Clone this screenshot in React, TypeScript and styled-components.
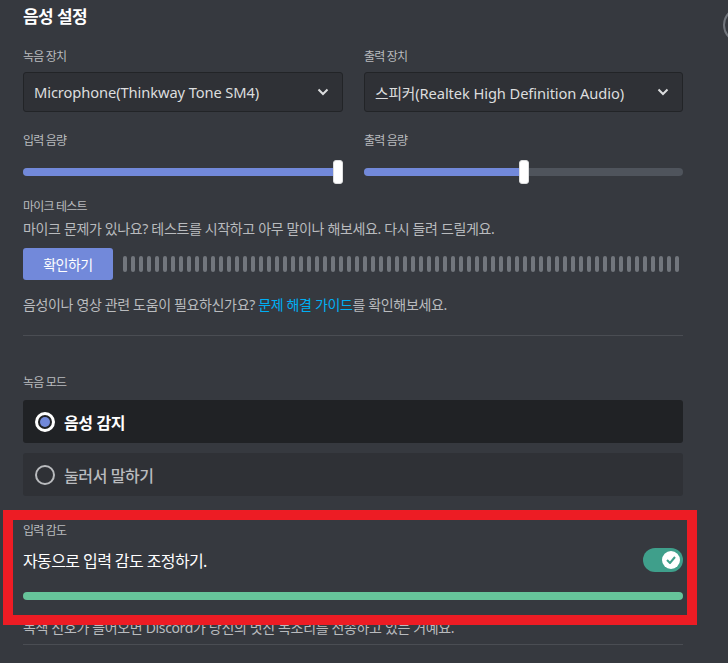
import styled, { createGlobalStyle } from "styled-components";

const GlobalStyle = createGlobalStyle`
  html, body {
    margin: 0;
    padding: 0;
    background: #36393f;
  }
  body {
    font-family: "Noto Sans", "Noto Sans CJK KR", sans-serif;
    color: #dcddde;
  }
`;

const meterBars = Array.from({ length: 70 });

const Slider = ({ value }: { value: number }) => {
  // handle center moves between 5px and (width - 5px)
  const pos = `calc(5px + (100% - 10px) * ${value / 100})`;
  return (
    <SliderTrack>
      <SliderFill style={{ width: pos }} />
      <SliderHandle style={{ left: pos }} />
    </SliderTrack>
  );
};

const Chevron = () => (
  <svg width="12" height="8" viewBox="0 0 12 8">
    <path d="M1.5 1.5 L6 6 L10.5 1.5" fill="none" stroke="#dcddde" strokeWidth="2" />
  </svg>
);

const App = () => {
  return (
    <Page>
      <GlobalStyle />
      <Content>
        <Title>음성 설정</Title>

        <TwoCols $top={20}>
          <div>
            <Label>녹음 장치</Label>
            <Select>
              <span>Microphone(Thinkway Tone SM4)</span>
              <Chevron />
            </Select>
          </div>
          <div>
            <Label>출력 장치</Label>
            <Select>
              <span>스피커(Realtek High Definition Audio)</span>
              <Chevron />
            </Select>
          </div>
        </TwoCols>

        <TwoCols $top={21}>
          <div>
            <Label $gap={11}>입력 음량</Label>
            <Slider value={100} />
          </div>
          <div>
            <Label $gap={11}>출력 음량</Label>
            <Slider value={50} />
          </div>
        </TwoCols>

        <Label $top={15} $gap={4}>마이크 테스트</Label>
        <Description>
          마이크 문제가 있나요? 테스트를 시작하고 아무 말이나 해보세요. 다시 들려 드릴게요.
        </Description>
        <TestRow>
          <PrimaryButton>확인하기</PrimaryButton>
          <Meter>
            {meterBars.map((_, i) => (
              <MeterBar key={i} />
            ))}
          </Meter>
        </TestRow>
        <Description $top={15}>
          음성이나 영상 관련 도움이 필요하신가요? <Link>문제 해결 가이드</Link>를 확인해보세요.
        </Description>

        <Divider $top={20} />

        <Label $top={39} $gap={9}>녹음 모드</Label>
        <Options>
          <Option $selected>
            <Radio $selected />
            <span>음성 감지</span>
          </Option>
          <Option>
            <Radio />
            <span>눌러서 말하기</span>
          </Option>
        </Options>

        <Sensitivity>
          <Label $gap={9}>입력 감도</Label>
          <ToggleRow>
            <span>자동으로 입력 감도 조정하기.</span>
            <Toggle>
              <Knob>
                <svg width="10" height="8" viewBox="0 0 10 8">
                  <path d="M1 4 L4 7 L9 1" fill="none" stroke="#3f9f8b" strokeWidth="2" />
                </svg>
              </Knob>
            </Toggle>
          </ToggleRow>
          <LevelBar />
          <Highlight />
        </Sensitivity>

        <Description $top={18}>
          녹색 신호가 들어오면 Discord가 당신의 멋진 목소리를 전송하고 있는 거예요.
        </Description>
        <Divider $top={6} />
      </Content>
      <Tools>
        <CloseCircle />
      </Tools>
    </Page>
  );
};

export default App;

const Page = styled.div`
  display: flex;
  width: 728px;
  height: 663px;
  overflow: hidden;
  background: #36393f;
`;

const Content = styled.div`
  width: 660px;
  flex-shrink: 0;
  padding: 5px 0 0 23px;
  display: flex;
  flex-direction: column;
`;

const Tools = styled.div`
  flex-shrink: 0;
  margin-left: 40px;
  padding-top: 7px;
`;

const CloseCircle = styled.div`
  width: 32px;
  height: 32px;
  border-radius: 50%;
  border: 2px solid #72767d;
`;

const Title = styled.h2`
  margin: 0;
  font-size: 17px;
  line-height: 24px;
  font-weight: 700;
  color: #fff;
  letter-spacing: -0.6px;
`;

const TwoCols = styled.div<{ $top: number }>`
  display: grid;
  grid-template-columns: 320px 319px;
  column-gap: 21px;
  margin-top: ${(p) => p.$top}px;
`;

const Label = styled.div<{ $top?: number; $gap?: number }>`
  font-size: 12px;
  line-height: 16px;
  color: #b9bbbe;
  letter-spacing: -0.8px;
  margin-top: ${(p) => p.$top ?? 0}px;
  margin-bottom: ${(p) => p.$gap ?? 7}px;
`;

const Select = styled.div`
  box-sizing: border-box;
  height: 40px;
  display: flex;
  align-items: center;
  justify-content: space-between;
  padding: 0 13px 0 10px;
  background: #2f3136;
  border: 1px solid #222427;
  border-radius: 3px;
  font-size: 14.7px;
  color: #dcddde;
  letter-spacing: -0.1px;
`;

const SliderTrack = styled.div`
  position: relative;
  height: 24px;
  &::before {
    content: "";
    position: absolute;
    left: 0;
    right: 0;
    top: 8px;
    height: 8px;
    border-radius: 4px;
    background: #4f545c;
  }
`;

const SliderFill = styled.div`
  position: absolute;
  left: 0;
  top: 8px;
  height: 8px;
  border-radius: 4px;
  background: #7289da;
`;

const SliderHandle = styled.div`
  position: absolute;
  top: 0;
  width: 10px;
  height: 24px;
  margin-left: -5px;
  box-sizing: border-box;
  border-radius: 3px;
  background: #fff;
  border: 1px solid #dcddde;
`;

const Description = styled.div<{ $top?: number }>`
  font-size: 14px;
  line-height: 20px;
  color: #b9bbbe;
  letter-spacing: -0.35px;
  margin-top: ${(p) => p.$top ?? 0}px;
  white-space: nowrap;
`;

const Link = styled.span`
  color: #00aff4;
`;

const TestRow = styled.div`
  display: flex;
  align-items: center;
  gap: 10px;
  margin-top: 9px;
`;

const PrimaryButton = styled.button`
  width: 90px;
  height: 32px;
  border: none;
  border-radius: 3px;
  background: #7289da;
  color: #fff;
  font-family: inherit;
  font-size: 14px;
  letter-spacing: -0.5px;
  padding: 0;
`;

const Meter = styled.div`
  display: flex;
  gap: 4px;
`;

const MeterBar = styled.div`
  width: 4px;
  height: 16px;
  border-radius: 2px;
  background: #72767d;
`;

const Divider = styled.div<{ $top: number }>`
  height: 1px;
  background: #4a4d53;
  margin-top: ${(p) => p.$top}px;
`;

const Options = styled.div`
  display: flex;
  flex-direction: column;
  gap: 10px;
`;

const Option = styled.div<{ $selected?: boolean }>`
  height: 43px;
  display: flex;
  align-items: center;
  gap: 9px;
  padding-left: 12px;
  border-radius: 3px;
  background: ${(p) => (p.$selected ? "#202225" : "#2f3136")};
  color: ${(p) => (p.$selected ? "#fff" : "#b9bbbe")};
  font-size: 16px;
  font-weight: ${(p) => (p.$selected ? 700 : 500)};
  letter-spacing: -0.4px;
`;

const Radio = styled.div<{ $selected?: boolean }>`
  box-sizing: border-box;
  width: 20px;
  height: 20px;
  border-radius: 50%;
  border: ${(p) => (p.$selected ? "3px solid #fff" : "2px solid #b9bbbe")};
  display: flex;
  align-items: center;
  justify-content: center;
  &::after {
    content: "";
    display: ${(p) => (p.$selected ? "block" : "none")};
    width: 10px;
    height: 10px;
    border-radius: 50%;
    background: #7289da;
  }
`;

const Sensitivity = styled.div`
  position: relative;
  margin-top: 27px;
`;

const ToggleRow = styled.div`
  height: 24px;
  display: flex;
  align-items: center;
  justify-content: space-between;
  font-size: 16px;
  color: #fff;
  letter-spacing: -0.6px;
`;

const Toggle = styled.div`
  box-sizing: border-box;
  width: 40px;
  height: 24px;
  border-radius: 12px;
  background: #3f9f8b;
  display: flex;
  align-items: center;
  justify-content: flex-end;
  padding-right: 3px;
`;

const Knob = styled.div`
  width: 18px;
  height: 18px;
  border-radius: 50%;
  background: #fff;
  display: flex;
  align-items: center;
  justify-content: center;
`;

const LevelBar = styled.div`
  height: 8px;
  margin-top: 20px;
  border-radius: 4px;
  background: #66c49a;
`;

const Highlight = styled.div`
  position: absolute;
  top: -13px;
  bottom: -25px;
  left: -20px;
  right: -14px;
  border: 10px solid #ed1c24;
  pointer-events: none;
  z-index: 2;
`;
